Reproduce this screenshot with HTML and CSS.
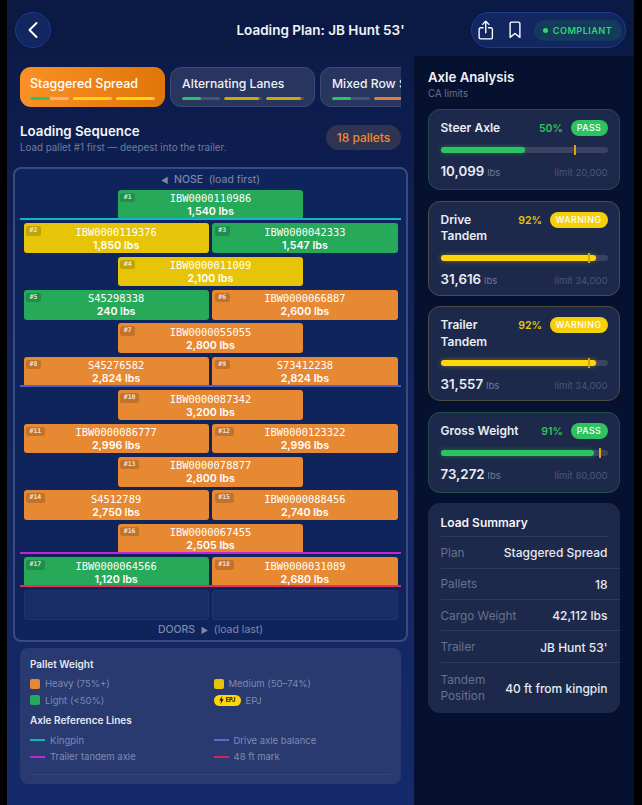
FILE: index.html
```html
<!DOCTYPE html>
<html lang="en">
<head>
  <meta charset="UTF-8" />
  <meta name="viewport" content="width=device-width, initial-scale=1.0"/>
  <title>Loading Plan</title>
  <link rel="stylesheet" href="styles.css">
</head>
<body>
  <div class="screen">
    <header class="topbar">
      <button class="back-btn" type="button">
        <svg width="12" height="18" viewBox="0 0 12 18"><path d="M9.5 2 L2.5 9 L9.5 16" fill="none" stroke="#fff" stroke-width="2" stroke-linecap="round" stroke-linejoin="round"/></svg>
      </button>
      <h1>Loading Plan: JB Hunt 53'</h1>
      <div class="actions">
        <svg class="act-icon" width="15.500" height="20" viewBox="0 0 17 22"><path d="M5.5 8.5 H3 a1.8 1.8 0 0 0 -1.8 1.8 V19 a1.8 1.8 0 0 0 1.8 1.8 H14 a1.8 1.8 0 0 0 1.8 -1.8 V10.3 A1.8 1.8 0 0 0 14 8.500 H11.500 M8.500 14 V1.500 M5 4.800 L8.500 1.300 L12 4.800" fill="none" stroke="#fff" stroke-width="1.500" stroke-linecap="round" stroke-linejoin="round"/></svg>
        <svg class="act-icon" width="12" height="18" viewBox="0 0 13 19"><path d="M1.200 2.500 a1.500 1.500 0 0 1 1.500 -1.500 H10.300 a1.500 1.500 0 0 1 1.500 1.500 V17.500 L6.500 13.300 L1.200 17.500 Z" fill="none" stroke="#fff" stroke-width="1.500" stroke-linejoin="round"/></svg>
        <span class="compliant"><i></i>COMPLIANT</span>
      </div>
    </header>

    <div class="main">
      <section class="plan-col">
        <div class="tabs">
          <div class="tab active">
            <div class="tab-name">Staggered Spread</div>
            <div class="tab-bars">
              <span class="seg"><b class="green" style="width:50%"></b></span>
              <span class="seg"><b class="yellow" style="width:92%"></b></span>
              <span class="seg"><b class="yellow" style="width:92%"></b></span>
            </div>
          </div>
          <div class="tab">
            <div class="tab-name">Alternating Lanes</div>
            <div class="tab-bars">
              <span class="seg"><b class="green" style="width:50%"></b></span>
              <span class="seg"><b class="dark-yellow" style="width:92%"></b></span>
              <span class="seg"><b class="dark-yellow" style="width:92%"></b></span>
            </div>
          </div>
          <div class="tab">
            <div class="tab-name">Mixed Row Spread</div>
            <div class="tab-bars">
              <span class="seg"><b class="green" style="width:50%"></b></span>
              <span class="seg"><b class="orange" style="width:92%"></b></span>
              <span class="seg"><b class="orange" style="width:92%"></b></span>
            </div>
          </div>
        </div>

        <div class="seq-head">
          <div>
            <h2>Loading Sequence</h2>
            <p>Load pallet #1 first — deepest into the trailer.</p>
          </div>
          <span class="count">18 pallets</span>
        </div>

        <div class="trailer">
          <div class="end-label nose"><span class="arrow">◀</span>  NOSE  <span class="end-note">(load first)</span></div>

          <div class="row">
            <div class="pallet light"><span class="num">#1</span><div class="pid">IBW0000110986</div><div class="lbs">1,540 lbs</div></div>
          </div>
          <div class="row">
            <div class="pallet medium"><span class="num">#2</span><div class="pid">IBW0000119376</div><div class="lbs">1,850 lbs</div></div>
            <div class="pallet light"><span class="num">#3</span><div class="pid">IBW0000042333</div><div class="lbs">1,547 lbs</div></div>
          </div>
          <div class="row">
            <div class="pallet medium"><span class="num">#4</span><div class="pid">IBW0000011009</div><div class="lbs">2,100 lbs</div></div>
          </div>
          <div class="row">
            <div class="pallet light"><span class="num">#5</span><div class="pid">S45298338</div><div class="lbs">240 lbs</div></div>
            <div class="pallet heavy"><span class="num">#6</span><div class="pid">IBW0000066887</div><div class="lbs">2,600 lbs</div></div>
          </div>
          <div class="row">
            <div class="pallet heavy"><span class="num">#7</span><div class="pid">IBW0000055055</div><div class="lbs">2,800 lbs</div></div>
          </div>
          <div class="row">
            <div class="pallet heavy"><span class="num">#8</span><div class="pid">S45276582</div><div class="lbs">2,824 lbs</div></div>
            <div class="pallet heavy"><span class="num">#9</span><div class="pid">S73412238</div><div class="lbs">2,824 lbs</div></div>
          </div>
          <div class="row">
            <div class="pallet heavy"><span class="num">#10</span><div class="pid">IBW0000087342</div><div class="lbs">3,200 lbs</div></div>
          </div>
          <div class="row">
            <div class="pallet heavy"><span class="num">#11</span><div class="pid">IBW0000086777</div><div class="lbs">2,996 lbs</div></div>
            <div class="pallet heavy"><span class="num">#12</span><div class="pid">IBW0000123322</div><div class="lbs">2,996 lbs</div></div>
          </div>
          <div class="row">
            <div class="pallet heavy"><span class="num">#13</span><div class="pid">IBW0000078877</div><div class="lbs">2,800 lbs</div></div>
          </div>
          <div class="row">
            <div class="pallet heavy"><span class="num">#14</span><div class="pid">S4512789</div><div class="lbs">2,750 lbs</div></div>
            <div class="pallet heavy"><span class="num">#15</span><div class="pid">IBW0000088456</div><div class="lbs">2,740 lbs</div></div>
          </div>
          <div class="row">
            <div class="pallet heavy"><span class="num">#16</span><div class="pid">IBW0000067455</div><div class="lbs">2,505 lbs</div></div>
          </div>
          <div class="row">
            <div class="pallet light"><span class="num">#17</span><div class="pid">IBW0000064566</div><div class="lbs">1,120 lbs</div></div>
            <div class="pallet heavy"><span class="num">#18</span><div class="pid">IBW0000031089</div><div class="lbs">2,680 lbs</div></div>
          </div>
          <div class="row">
            <div class="pallet empty"></div>
            <div class="pallet empty"></div>
          </div>

          <div class="end-label doors">DOORS  <span class="arrow">▶</span>  <span class="end-note">(load last)</span></div>

          <div class="ref-line kingpin"></div>
          <div class="ref-line drive"></div>
          <div class="ref-line tandem"></div>
          <div class="ref-line mark48"></div>
        </div>

        <div class="legend">
          <h3>Pallet Weight</h3>
          <div class="legend-grid">
            <div class="legend-item"><span class="swatch heavy"></span>Heavy (75%+)</div>
            <div class="legend-item"><span class="swatch medium"></span>Medium (50–74%)</div>
            <div class="legend-item"><span class="swatch light"></span>Light (&lt;50%)</div>
            <div class="legend-item">
              <span class="epj">
                <svg width="5" height="8" viewBox="0 0 5 8"><path d="M3.200 0 L0.300 4.500 H2 L1.500 8 L4.700 3.200 H2.800 Z" fill="#1a1a1a"/></svg>EPJ
              </span>EPJ
            </div>
          </div>
          <h3 class="legend-sub">Axle Reference Lines</h3>
          <div class="legend-grid lines">
            <div class="legend-item"><span class="line-key kingpin"></span>Kingpin</div>
            <div class="legend-item"><span class="line-key drive"></span>Drive axle balance</div>
            <div class="legend-item"><span class="line-key tandem"></span>Trailer tandem axle</div>
            <div class="legend-item"><span class="line-key mark48"></span>48 ft mark</div>
          </div>
          <div class="legend-rule"></div>
        </div>
      </section>

      <aside class="axle-col">
        <h2>Axle Analysis</h2>
        <p class="limits">CA limits</p>

        <div class="axle-card pass">
          <div class="axle-top">
            <span class="axle-name">Steer Axle</span>
            <span class="pct">50%</span>
            <span class="pill">PASS</span>
          </div>
          <div class="meter"><div class="fill" style="width:50.500%"></div><div class="marker" style="left:80%"></div></div>
          <div class="axle-nums"><span class="val">10,099</span><span class="unit">lbs</span><span class="limit">limit 20,000</span></div>
        </div>

        <div class="axle-card warn">
          <div class="axle-top">
            <span class="axle-name">Drive Tandem</span>
            <span class="pct">92%</span>
            <span class="pill">WARNING</span>
          </div>
          <div class="meter"><div class="fill" style="width:93%"></div><div class="marker" style="left:88.500%"></div></div>
          <div class="axle-nums"><span class="val">31,616</span><span class="unit">lbs</span><span class="limit">limit 34,000</span></div>
        </div>

        <div class="axle-card warn">
          <div class="axle-top">
            <span class="axle-name">Trailer Tandem</span>
            <span class="pct">92%</span>
            <span class="pill">WARNING</span>
          </div>
          <div class="meter"><div class="fill" style="width:93%"></div><div class="marker" style="left:88.500%"></div></div>
          <div class="axle-nums"><span class="val">31,557</span><span class="unit">lbs</span><span class="limit">limit 34,000</span></div>
        </div>

        <div class="axle-card pass">
          <div class="axle-top">
            <span class="axle-name">Gross Weight</span>
            <span class="pct">91%</span>
            <span class="pill">PASS</span>
          </div>
          <div class="meter"><div class="fill" style="width:92%"></div><div class="marker" style="left:95%"></div></div>
          <div class="axle-nums"><span class="val">73,272</span><span class="unit">lbs</span><span class="limit">limit 80,000</span></div>
        </div>

        <div class="summary">
          <h3>Load Summary</h3>
          <div class="sum-row"><span class="sum-key">Plan</span><span class="sum-val">Staggered Spread</span></div>
          <div class="sum-row"><span class="sum-key">Pallets</span><span class="sum-val">18</span></div>
          <div class="sum-row"><span class="sum-key">Cargo Weight</span><span class="sum-val">42,112 lbs</span></div>
          <div class="sum-row"><span class="sum-key">Trailer</span><span class="sum-val">JB Hunt 53'</span></div>
          <div class="sum-row last"><span class="sum-key">Tandem Position</span><span class="sum-val">40 ft from kingpin</span></div>
        </div>
      </aside>
    </div>
  </div>
</body>
</html>
```

FILE: styles.css
```css
* { box-sizing: border-box; }
body {
  margin: 0;
  background: #000;
  font-family: 'Inter', 'Liberation Sans', sans-serif;
  color: #fff;
}
h1, h2, h3, p { margin: 0; }

.screen {
  width: 627px;
  height: 805px;
  margin-left: 7px;
  display: flex;
  flex-direction: column;
  overflow: hidden;
  background: #0b1a45;
}

/* top bar */
.topbar {
  height: 56px;
  flex: none;
  display: flex;
  align-items: center;
  padding: 4px 8px 0 8px;
  background: #0b1a45;
}
.back-btn {
  width: 36px;
  height: 36px;
  flex: none;
  border-radius: 50%;
  border: 1px solid #1d3a8c;
  background: #12265f;
  padding: 0;
  display: flex;
  align-items: center;
  justify-content: center;
}
.topbar h1 {
  font-size: 13.500px;
  font-weight: 600;
  flex: 1;
  text-align: center;
  padding-left: 119px;
  white-space: nowrap;
  color: #f2f4f8;
}
.actions {
  width: 155px;
  height: 36px;
  flex: none;
  border-radius: 18px;
  border: 1px solid #1d3a8c;
  background: #12265f;
  display: flex;
  align-items: center;
  padding-left: 6px;
}
.act-icon { flex: none; }
.act-icon + .act-icon { margin-left: 15.500px; }
.compliant {
  margin-left: 12.500px;
  width: 88px;
  height: 21px;
  flex: none;
  border-radius: 11px;
  background: #143a5c;
  color: #2ed573;
  font-size: 9.200px;
  font-weight: 600;
  letter-spacing: 0.4px;
  display: flex;
  align-items: center;
  justify-content: center;
  gap: 5px;
}
.compliant i {
  width: 5px;
  height: 5px;
  border-radius: 50%;
  background: #2ed573;
}

.main { flex: 1; display: flex; min-height: 0; }

/* left column */
.plan-col {
  width: 407px;
  flex: none;
  padding: 11px 6px 0;
  background: linear-gradient(180deg, #0c1b4a 0%, #122560 55%, #152a6a 100%);
}
.tabs {
  display: flex;
  gap: 5px;
  margin: 0 7px;
  overflow: hidden;
}
.tab {
  width: 145px;
  height: 40px;
  flex: none;
  padding: 9px 10px 0 11px;
  border-radius: 11px;
  background: #27355f;
  border: 1px solid #3c4a76;
}
.tab.active {
  background: linear-gradient(90deg, #fb9028 0%, #df7608 100%);
  border: none;
  padding: 10px 10px 0;
}
.tab-name {
  font-size: 12.200px;
  font-weight: 500;
  color: #eef1f6;
  white-space: nowrap;
  line-height: 14px;
}
.tab.active .tab-name { color: #fff; font-size: 12.500px; }
.tab-bars { display: flex; gap: 3.500px; margin-top: 6px; }
.seg {
  flex: 1;
  height: 3px;
  border-radius: 2px;
  background: #47547c;
  overflow: hidden;
  display: block;
}
.tab.active .seg { background: #f6b27a; }
.seg b { display: block; height: 100%; border-radius: 2px; }
.seg .green { background: #2dc45f; }
.seg .yellow { background: #ffd60a; }
.seg .dark-yellow { background: #c9a808; }
.seg .orange { background: #e0813a; }

.seq-head {
  margin: 16px 7px 0;
  height: 44px;
  display: flex;
  justify-content: space-between;
}
.seq-head h2 { font-size: 13.300px; font-weight: 600; line-height: 17px; color: #f2f4f8; }
.seq-head p { font-size: 9.800px; color: #6f7c9f; line-height: 12px; margin-top: 2px; }
.count {
  margin-top: 2px;
  width: 75px;
  height: 25px;
  border-radius: 13px;
  background: #2f3452;
  color: #f08c2e;
  font-size: 12px;
  font-weight: 500;
  display: flex;
  align-items: center;
  justify-content: center;
}

/* trailer */
.trailer {
  position: relative;
  height: 475px;
  border: 2px solid #3a4a7c;
  border-radius: 8px;
  padding: 0 8.500px;
  background: #10245c;
  display: flex;
  flex-direction: column;
  gap: 3.600px;
}
.end-label {
  font-size: 10.500px;
  font-weight: 500;
  color: #7c89ab;
  text-align: center;
  white-space: pre;
}
.end-label.nose { height: 17.800px; padding-top: 5px; margin-bottom: -0.600px; line-height: 12px; }
.end-label.doors { line-height: 14px; margin-top: -0.500px; }
.end-note { font-weight: 400; }
.arrow { font-size: 8px; }
.row {
  display: flex;
  justify-content: center;
  gap: 3.500px;
  height: 29.800px;
  flex: none;
}
.pallet {
  position: relative;
  width: 185.500px;
  border-radius: 3px;
  text-align: center;
  padding-top: 2.500px;
  color: #fff;
}
.pallet.light { background: #27a95a; }
.pallet.medium { background: #e6c508; }
.pallet.heavy { background: #e78833; }
.pallet.empty { background: #182c66; border: 1px solid #20356f; }
.pid {
  font-family: 'DejaVu Sans Mono', 'Liberation Mono', monospace;
  font-size: 10.400px;
  line-height: 13px;
  font-weight: 400;
}
.lbs { font-size: 10.700px; font-weight: 600; line-height: 13px; }
.num {
  position: absolute;
  top: 3px;
  left: 2.500px;
  padding: 0 3.500px;
  height: 9.500px;
  line-height: 9.500px;
  border-radius: 2.500px;
  background: rgba(0, 0, 0, 0.16);
  font-family: 'DejaVu Sans Mono', 'Liberation Mono', monospace;
  font-size: 6.500px;
  font-weight: 700;
  color: rgba(255, 255, 255, 0.8);
}

.ref-line {
  position: absolute;
  left: 5px;
  right: 5px;
  height: 2px;
}
.ref-line.kingpin { top: 48.500px; background: #12b5c6; }
.ref-line.drive { top: 216px; background: #4c5fd0; }
.ref-line.tandem { top: 382.500px; background: #c026d3; }
.ref-line.mark48 { top: 416px; background: #e0315a; }

/* legend */
.legend {
  margin: 6px 7px 0;
  height: 136px;
  padding: 10px 10px 0;
  border-radius: 8px;
  background: #283a70;
}
.legend h3 { font-size: 10px; font-weight: 600; line-height: 12px; color: #e6e9f2; }
.legend-grid {
  display: grid;
  grid-template-columns: 1fr 1fr;
  column-gap: 6px;
  row-gap: 4.500px;
  margin-top: 7.500px;
}
.legend-sub { margin-top: 7.500px; }
.legend-grid.lines { margin-top: 8.500px; }
.legend-item {
  display: flex;
  align-items: center;
  height: 12px;
  gap: 5px;
  font-size: 9.500px;
  color: #7e8bb0;
  white-space: nowrap;
}
.swatch { width: 10px; height: 10px; border-radius: 2px; flex: none; }
.swatch.heavy { background: #e78833; }
.swatch.medium { background: #e6c508; }
.swatch.light { background: #27a95a; }
.epj {
  width: 27px;
  height: 11px;
  border-radius: 6px;
  background: #ffd60a;
  color: #1a1a1a;
  font-size: 5.500px;
  font-weight: 800;
  display: flex;
  align-items: center;
  justify-content: center;
  gap: 2px;
}
.line-key { width: 15px; height: 2px; flex: none; }
.line-key.kingpin { background: #12b5c6; }
.line-key.drive { background: #5d6bd0; }
.line-key.tandem { background: #b52bd6; }
.line-key.mark48 { background: #c22c5a; }
.legend-rule { margin-top: 11px; height: 1px; background: #34457a; }

/* right column */
.axle-col {
  width: 220px;
  flex: none;
  padding: 13px 14px 0;
  background: #06112f;
}
.axle-col > h2 { font-size: 13.200px; font-weight: 600; line-height: 17px; color: #f2f4f8; }
.limits { font-size: 9.700px; line-height: 11px; margin-top: 1.500px; color: #66718f; }
.axle-card {
  margin-top: 10.500px;
  padding: 10px 11.500px 0;
  height: 81px;
  border-radius: 12px;
  background: #1d294a;
  border: 1px solid;
}
.limits + .axle-card { margin-top: 10.800px; }
.axle-card.pass { border-color: #1f4f4c; }
.axle-card.warn { border-color: #4c4c42; height: 95px; }
.axle-top {
  display: flex;
  align-items: flex-start;
  min-height: 16px;
}
.axle-name {
  font-size: 12px;
  font-weight: 600;
  line-height: 16.500px;
  color: #e9ecf3;
  flex: 1;
}
.warn .axle-name { width: 50px; flex: 1 1 0; }
.pct { font-size: 10.500px; font-weight: 600; line-height: 16px; margin-right: 7.500px; margin-top: 1px; }
.pass .pct { color: #2dc45f; }
.warn .pct { color: #e6c508; }
.pill {
  height: 16px;
  border-radius: 8px;
  font-size: 8.800px;
  font-weight: 500;
  letter-spacing: 0.5px;
  line-height: 16px;
  text-align: center;
  color: #fff;
}
.pass .pill { width: 37px; background: #2dc45f; }
.warn .pill { width: 58px; background: #f5cf08; }
.meter {
  position: relative;
  height: 6px;
  margin-top: 10px;
  border-radius: 3px;
  background: #3a435f;
}
.fill { height: 100%; border-radius: 3px; }
.pass .fill { background: #2dc45f; box-shadow: 0 0 5px rgba(45, 196, 95, 0.45); }
.warn .fill { background: #ffd60a; box-shadow: 0 0 5px rgba(255, 214, 10, 0.4); }
.marker {
  position: absolute;
  top: -2px;
  width: 1.500px;
  height: 10px;
  background: #d9a50a;
}
.axle-nums {
  display: flex;
  align-items: baseline;
  margin-top: 9px;
}
.val { font-size: 13.300px; font-weight: 600; color: #e9ecf3; line-height: 18px; }
.unit { font-size: 9.500px; color: #6f7a96; margin-left: 3px; }
.limit { margin-left: auto; font-size: 9.500px; color: #4b5674; }

.summary {
  margin-top: 10.500px;
  height: 210px;
  padding: 0 0 0 12.500px;
  border-radius: 12px;
  background: #1d294a;
  overflow: hidden;
}
.summary h3 {
  font-size: 12px;
  font-weight: 600;
  color: #f2f4f8;
  line-height: 16px;
  margin-right: 12.500px;
  padding: 12px 0 5.500px;
  height: 34px;
  border-bottom: 1px solid #2e3a5c;
}
.sum-row {
  display: flex;
  align-items: center;
  justify-content: space-between;
  height: 31.400px;
  padding: 1px 12.500px 0 0;
  border-bottom: 1px solid #2e3a5c;
  font-size: 11.800px;
}
.sum-row.last { height: 50px; border-bottom: none; }
.sum-key { color: #667190; line-height: 16.500px; }
.last .sum-key { width: 50px; }
.sum-val { color: #e6e9f2; font-weight: 500; white-space: nowrap; font-size: 12px; }
```
